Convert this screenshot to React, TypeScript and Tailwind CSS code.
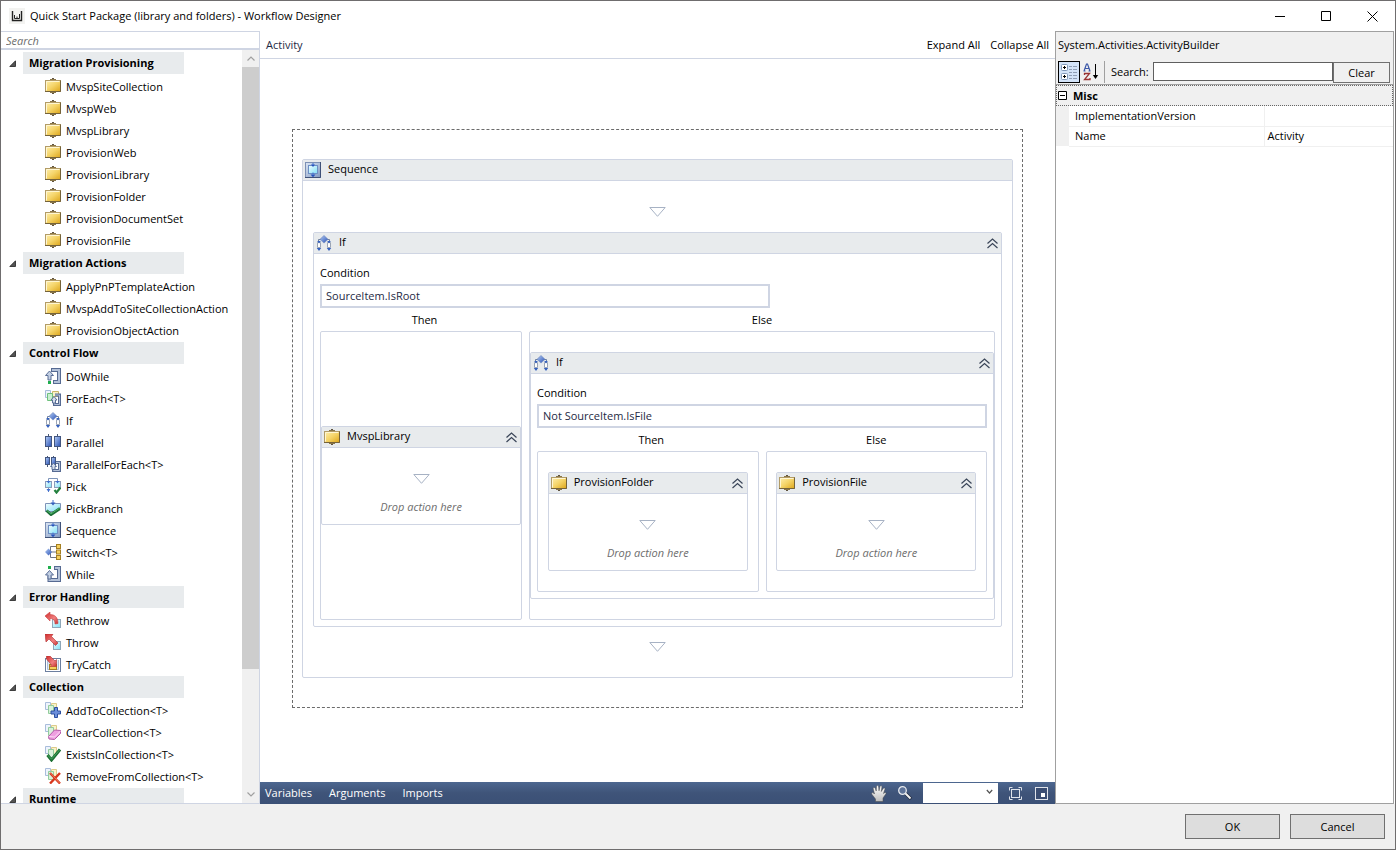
import { ReactNode } from "react";
import clsx from "clsx";

type IconName =
  | "activity" | "doWhile" | "forEach" | "if" | "parallel" | "parallelForEach" | "pick" | "pickBranch"
  | "sequence" | "switch" | "while" | "rethrow" | "throw" | "tryCatch"
  | "addTo" | "clear" | "exists" | "remove";

const toolbox: { title: string; items: [IconName, string][] }[] = [
  {
    title: "Migration Provisioning",
    items: [
      ["activity", "MvspSiteCollection"],
      ["activity", "MvspWeb"],
      ["activity", "MvspLibrary"],
      ["activity", "ProvisionWeb"],
      ["activity", "ProvisionLibrary"],
      ["activity", "ProvisionFolder"],
      ["activity", "ProvisionDocumentSet"],
      ["activity", "ProvisionFile"],
    ],
  },
  {
    title: "Migration Actions",
    items: [
      ["activity", "ApplyPnPTemplateAction"],
      ["activity", "MvspAddToSiteCollectionAction"],
      ["activity", "ProvisionObjectAction"],
    ],
  },
  {
    title: "Control Flow",
    items: [
      ["doWhile", "DoWhile"],
      ["forEach", "ForEach<T>"],
      ["if", "If"],
      ["parallel", "Parallel"],
      ["parallelForEach", "ParallelForEach<T>"],
      ["pick", "Pick"],
      ["pickBranch", "PickBranch"],
      ["sequence", "Sequence"],
      ["switch", "Switch<T>"],
      ["while", "While"],
    ],
  },
  {
    title: "Error Handling",
    items: [
      ["rethrow", "Rethrow"],
      ["throw", "Throw"],
      ["tryCatch", "TryCatch"],
    ],
  },
  {
    title: "Collection",
    items: [
      ["addTo", "AddToCollection<T>"],
      ["clear", "ClearCollection<T>"],
      ["exists", "ExistsInCollection<T>"],
      ["remove", "RemoveFromCollection<T>"],
    ],
  },
  { title: "Runtime", items: [] },
];

/* ---------- icons ---------- */

// shared gradients, referenced by id from every icon
function Gradients() {
  return (
    <svg className="absolute h-0 w-0" aria-hidden="true">
      <defs>
        <linearGradient id="gold" x1="0" y1="0" x2="1" y2="1">
          <stop offset="0" stopColor="#fff0b0" />
          <stop offset="0.5" stopColor="#f5d468" />
          <stop offset="1" stopColor="#dca51a" />
        </linearGradient>
        <linearGradient id="blue" x1="0" y1="0" x2="1" y2="1">
          <stop offset="0" stopColor="#b4cdf5" />
          <stop offset="1" stopColor="#2850b4" />
        </linearGradient>
        <linearGradient id="frame" x1="0" y1="0" x2="1" y2="1">
          <stop offset="0" stopColor="#dce6f4" />
          <stop offset="1" stopColor="#8299c0" />
        </linearGradient>
        <linearGradient id="sky" x1="0" y1="0" x2="1" y2="1">
          <stop offset="0" stopColor="#f2fdff" />
          <stop offset="1" stopColor="#7fe0f6" />
        </linearGradient>
        <linearGradient id="red" x1="0" y1="0" x2="1" y2="1">
          <stop offset="0" stopColor="#d02a2a" />
          <stop offset="0.6" stopColor="#f08080" />
          <stop offset="1" stopColor="#c83030" />
        </linearGradient>
        <linearGradient id="hand" x1="0" y1="0" x2="0" y2="1">
          <stop offset="0" stopColor="#ffffff" />
          <stop offset="1" stopColor="#bdbdbd" />
        </linearGradient>
      </defs>
    </svg>
  );
}

// stack of three sheets behind the collection icons
const pages = (
  <>
    <path d="M.5.5h5v7h-5z" fill="#eef4fc" stroke="#a9bddb" />
    <path d="M6.5 1.5h5v7h-5z" fill="#fbf2c8" stroke="#dccb8a" />
    <path d="M3.5 3.5h5v8h-5z" fill="#d9f2dc" stroke="#93cc9c" />
  </>
);

const shapes: Record<IconName, ReactNode> = {
  activity: (
    <>
      <path d="M7 .5h2M7 15.5h2" stroke="#5f5340" />
      <path d="M5 1.5h6M5 14.5h6" stroke="#8a7648" />
      <rect x="0.5" y="2.5" width="15" height="11" fill="url(#gold)" stroke="#b39c66" />
      <path d="M1.5 12.5v-9h13" fill="none" stroke="#fff6d2" />
      <path d="M0 13.5h15.5v-11" fill="none" stroke="#75633a" />
    </>
  ),
  doWhile: (
    <>
      <path d="M6 2h8v12H8" fill="none" stroke="#566a92" strokeWidth="4" />
      <path d="M7 2h7v12H9" fill="none" stroke="#b3c1d8" strokeWidth="2" />
      <path d="M4.5 3l4 4.5H6V12H3V7.500H.5z" fill="#c3d0e4" stroke="#5b6f96" />
      <rect x="3" y="13" width="3" height="3" fill="#1fae4d" />
    </>
  ),
  while: (
    <>
      <path d="M9 2h5v12H4.500V10" fill="none" stroke="#566a92" strokeWidth="4" />
      <path d="M10 2h4v12H4.500V10" fill="none" stroke="#b3c1d8" strokeWidth="2" />
      <path d="M4.500 4.500l4 4.500H6v4H3V9H.5z" fill="#c3d0e4" stroke="#5b6f96" />
      <rect x="3" y="0" width="3" height="3" fill="#1fae4d" />
    </>
  ),
  forEach: (
    <>
      <path d="M.5.5h5v7h-5z" fill="#eef4fc" stroke="#a9bddb" />
      <path d="M7.5 1.5h6v5h-6z" fill="#fbf2c8" stroke="#c9b468" />
      <path d="M2.5 3.5h5v7h-5z" fill="#c9efd0" stroke="#6ec07c" />
      <path d="M10 5h4.5v9.5h-5V10" fill="none" stroke="#566a92" strokeWidth="3" />
      <path d="M10 5h4.5v9.5h-5V10" fill="none" stroke="#b3c1d8" />
      <path d="M9 6.5l3 3.5h-1.5v3h-3v-3H6z" fill="#d5deec" stroke="#5b6f96" />
    </>
  ),
  if: (
    <>
      <path d="M5 4.5H2.5V7M11 4.5h2.5V7" fill="none" stroke="#6d7f9f" />
      <path d="M1.5 7.5h3v5h-3zM11.5 7.5h3v5h-3z" fill="#fff" stroke="#9ba5b5" />
      <path d="M8 .5l4 3.8-4 3.8-4-3.8z" fill="url(#blue)" stroke="#6b84b8" strokeWidth=".6" />
      <path d="M1.2 6h3.600L3 8.500zM11.200 6h3.600L13 8.500zM.8 13h4.400L3 16zM10.800 13h4.400L13 16z" fill="#3560bd" />
    </>
  ),
  parallel: (
    <>
      <path d="M3.5 0v16M12.5 0v16" stroke="#4a5a78" />
      <rect x=".5" y="2.5" width="6" height="10" fill="url(#blue)" stroke="#42557f" />
      <rect x="9.5" y="2.5" width="6" height="10" fill="url(#blue)" stroke="#42557f" />
    </>
  ),
  parallelForEach: (
    <>
      <path d="M2.5 0v11M8.5 0v10" stroke="#4a5a78" />
      <rect x=".5" y="1.5" width="4" height="7" fill="url(#blue)" stroke="#42557f" />
      <rect x="6.5" y="1.5" width="4" height="7" fill="url(#blue)" stroke="#42557f" />
      <path d="M11 6.5h3.5v8h-6V11" fill="none" stroke="#566a92" strokeWidth="3" />
      <path d="M11 6.5h3.5v8h-6V11" fill="none" stroke="#b4c2d8" />
      <path d="M8.5 7l3 3.5H10v3H7v-3H5.500z" fill="#d5deec" stroke="#5b6f96" />
    </>
  ),
  pick: (
    <>
      <path d="M3.5 4V.5h9V4M3.5 8v6" fill="none" stroke="#7d93b8" />
      <rect x=".5" y="3.5" width="6" height="6" fill="url(#sky)" stroke="#8b9dba" />
      <rect x="9.5" y="3.5" width="6" height="6" fill="url(#sky)" stroke="#8b9dba" />
      <path d="M1.500 3h4l-2 2.500zM10.500 3h4l-2 2.500zM1.500 11h4l-2 3z" fill="#3f6fd0" />
      <path d="M9.500 12l2 2.500 4-5" fill="none" stroke="#23803e" strokeWidth="2.200" />
    </>
  ),
  pickBranch: (
    <>
      <path d="M8 0v4" stroke="#3f6fd0" />
      <path d="M.5 3.500h15v5l-4.500 3H.500z" fill="url(#sky)" stroke="#7d93b8" />
      <path d="M5.500 2.500h5L8 5.500z" fill="#3560bd" />
      <path d="M1.500 10.500l4.500 4L15 8.500" fill="none" stroke="#1d6f38" strokeWidth="3" />
      <path d="M2 10.500l4 3.300 8.500-5.600" fill="none" stroke="#4bb268" />
    </>
  ),
  sequence: (
    <>
      <rect x=".5" y=".5" width="15" height="15" fill="url(#frame)" stroke="#7c90b4" />
      <path d="M0 15.500h15.500V0" fill="none" stroke="#3f5178" />
      <rect x="3.500" y="3.500" width="9" height="8" fill="url(#sky)" stroke="#6d8fc4" />
      <path d="M6 2.500h4L8 5zM5.500 12.500h5L8 15.200z" fill="#2453bd" />
      <path d="M8 1v2M8 10.500v2" stroke="#3f6fd0" />
    </>
  ),
  switch: (
    <>
      <path d="M11 2.500H5.500v11H11M3 8h8" fill="none" stroke="#6f7480" />
      <path d="M3.500 4.500L7 8l-3.500 3.500L0 8z" fill="url(#blue)" />
      <rect x="11.500" y=".5" width="4" height="4" fill="#f5cf5c" stroke="#a57f20" />
      <rect x="11.500" y="6" width="4" height="4" fill="#f5cf5c" stroke="#a57f20" />
      <rect x="11.500" y="11.500" width="4" height="4" fill="#f5cf5c" stroke="#a57f20" />
    </>
  ),
  rethrow: (
    <>
      <rect x="7.500" y="7.500" width="8" height="8" fill="url(#sky)" stroke="#8fa7b8" />
      <path
        d="M0 4l5-4v2.500c5 0 8 3 8 9l-3 .5c0-4-2-5.500-5-5.500V9z"
        fill="url(#red)"
        stroke="#c94040"
        strokeWidth=".6"
      />
    </>
  ),
  throw: (
    <>
      <rect x="8.500" y="7.500" width="7" height="8" fill="url(#sky)" stroke="#8fa7b8" />
      <path d="M0 0h8L6.500 2.500 13 9l-2.500 2.500L4 5 1 8z" fill="url(#red)" stroke="#b03030" strokeWidth=".6" />
    </>
  ),
  tryCatch: (
    <>
      <rect x=".5" y="2.500" width="15" height="13" fill="#fff" stroke="#6c7f9f" />
      <path d="M2.500 4v9.500h11V4" fill="#dcebf7" stroke="#a9bdd6" />
      <rect x="4.500" y="8.500" width="7" height="5" fill="#f5cf5c" stroke="#a57f20" />
      <path
        d="M1.500 0H5l5 5 1.500-1.500V10.500H5L6.500 9 1.500 3z"
        fill="url(#red)"
        stroke="#b03030"
        strokeWidth=".6"
      />
    </>
  ),
  addTo: (
    <>
      {pages}
      <path d="M9.500 5.500h3v3.500h3v3h-3v3.500h-3V12H6V9h3.500z" fill="#6c8fdc" stroke="#2c4fa0" />
    </>
  ),
  clear: (
    <>
      {pages}
      <path d="M3.500 12.500l6-6.500 6 .5v3l-6 6-5.500-.5z" fill="#ee9fe0" stroke="#b45aa8" />
      <path d="M4 12.500l5.500.5 6-6" fill="none" stroke="#fbdcf5" />
    </>
  ),
  exists: (
    <>
      {pages}
      <path d="M2.500 9l4 5L15 3.500" fill="none" stroke="#1c7034" strokeWidth="3" />
      <path d="M2.800 9.200l3.700 4L14.500 4" fill="none" stroke="#45a55e" />
    </>
  ),
  remove: (
    <>
      {pages}
      <path d="M5 5l10 10.500M15 5L5 15.500" stroke="#d8361c" strokeWidth="2.400" />
      <path d="M5.500 5l9 10" stroke="#f28a6a" strokeWidth=".8" />
    </>
  ),
};

function Icon({ name }: { name: IconName }) {
  return (
    <svg viewBox="0 0 16 16" className="h-4 w-4 shrink-0" aria-hidden="true">
      {shapes[name]}
    </svg>
  );
}

function DropArrow() {
  return (
    <svg viewBox="0 0 17 10" className="h-2.5 w-[17px]" aria-hidden="true">
      <path d="M.8.5h15.400L8.500 9.300z" fill="#fff" stroke="#a7b2c4" />
    </svg>
  );
}

function CollapseButton() {
  return (
    <button type="button" aria-label="Collapse" className="mr-[3px] ml-auto flex h-3 w-3 items-center justify-center">
      <svg viewBox="0 0 11 11" className="h-[11px] w-[11px]" fill="none" stroke="#3a4558" strokeWidth="1.2">
        <path d="M.5 5.500L5.500 1l5 4.500M.5 10l5-4.500 5 4.500" />
      </svg>
    </button>
  );
}

/* ---------- designer surface ---------- */

type CardProps = { icon: IconName; title: string; collapsible?: boolean; className?: string; children: ReactNode };

function Card({ icon, title, collapsible = true, className, children }: CardProps) {
  return (
    <section className={clsx("rounded-xs border border-[#cfd5e3] bg-white", className)}>
      <header className="flex h-[21px] items-center border-b border-[#cfd5e3] bg-[#e8ebed] pl-0.5">
        <Icon name={icon} />
        <h3 className="pb-0.5 pl-[7px]">{title}</h3>
        {collapsible && <CollapseButton />}
      </header>
      {children}
    </section>
  );
}

function ActionCard({ title }: { title: string }) {
  return (
    <Card icon="activity" title={title} className="w-[200px]">
      <div className="flex h-[76px] flex-col items-center pt-[26px]">
        <DropArrow />
        <p className="pt-[15px] italic text-[#6d6d6d]">Drop action here</p>
      </div>
    </Card>
  );
}

function Branch({ label, padded, children }: { label: "Then" | "Else"; padded?: boolean; children: ReactNode }) {
  return (
    <div className="flex grow flex-col">
      {/* the first label is centred over its column and the gap */}
      <h4 className={clsx("pb-[3px] text-center", label === "Then" && "pl-[7px]")}>{label}</h4>
      <div
        className={clsx(
          "flex grow items-center justify-center rounded-xs border border-[#cfd5e3] py-5",
          padded && "px-[9px]"
        )}
      >
        {children}
      </div>
    </div>
  );
}

function IfActivity({ id, condition, children }: { id: string; condition: string; children: ReactNode }) {
  return (
    <Card icon="if" title="If">
      <div className="p-1.5 pt-[11px]">
        <label htmlFor={id} className="block">
          Condition
        </label>
        <input
          id={id}
          defaultValue={condition}
          className="mt-[3px] block h-6 w-[450px] border-2 border-[#cfd5e3] px-1 pb-0.5 text-[#1e2a44] outline-none"
        />
        <div className="mt-1 flex gap-[7px]">{children}</div>
      </div>
    </Card>
  );
}

function DropZone({ className }: { className: string }) {
  return (
    <div className={clsx("flex items-start justify-center", className)}>
      <DropArrow />
    </div>
  );
}

function Designer() {
  return (
    <div className="flex min-h-0 grow items-start justify-center overflow-hidden bg-white pt-[70px]">
      <div className="border border-dashed border-[#6b6b6b] px-[9px] py-[29px]">
        <Card icon="sequence" title="Sequence" collapsible={false}>
          <div className="px-2.5">
            <DropZone className="h-[51px] pt-[26px]" />
            <IfActivity id="condition-root" condition="SourceItem.IsRoot">
              <Branch label="Then">
                <ActionCard title="MvspLibrary" />
              </Branch>
              <Branch label="Else">
                <IfActivity id="condition-file" condition="Not SourceItem.IsFile">
                  <Branch label="Then" padded>
                    <ActionCard title="ProvisionFolder" />
                  </Branch>
                  <Branch label="Else" padded>
                    <ActionCard title="ProvisionFile" />
                  </Branch>
                </IfActivity>
              </Branch>
            </IfActivity>
            <DropZone className="h-[50px] pt-[15px]" />
          </div>
        </Card>
      </div>
    </div>
  );
}

/* ---------- panels ---------- */

function TitleBar() {
  return (
    <header className="flex h-[30px] shrink-0 items-center bg-white pl-2">
      <svg viewBox="0 0 16 16" className="h-4 w-4" fill="none" stroke="#222">
        <path d="M0 0h16v16H0z" fill="#f3f3f1" stroke="none" />
        <path d="M3.500 3v9.500h9V3" strokeWidth="1.400" />
        <path d="M5.500 7v3.500M8 8.500v2M10.500 6v4.500M5.500 10.500h5" />
      </svg>
      <h1 className="pl-[5px]">Quick Start Package (library and folders) - Workflow Designer</h1>
      <div className="ml-auto flex h-full">
        <button type="button" aria-label="Minimize" className="flex w-[46px] items-center justify-center">
          <svg viewBox="0 0 11 11" className="h-[11px] w-[11px]" stroke="#000">
            <path d="M0 5.500h10" />
          </svg>
        </button>
        <button type="button" aria-label="Maximize" className="flex w-[46px] items-center justify-center">
          <svg viewBox="0 0 11 11" className="h-[11px] w-[11px]" fill="none" stroke="#000">
            <path d="M.5.5h9v9h-9z" />
          </svg>
        </button>
        <button type="button" aria-label="Close" className="flex w-[46px] items-center justify-center">
          <svg viewBox="0 0 11 11" className="h-[11px] w-[11px]" stroke="#000">
            <path d="M.5.5l10 10M10.500.5l-10 10" />
          </svg>
        </button>
      </div>
    </header>
  );
}

function ScrollArrow({ up }: { up?: boolean }) {
  return (
    <button
      type="button"
      aria-label={up ? "Scroll up" : "Scroll down"}
      className="flex h-[17px] shrink-0 items-center justify-center"
    >
      <svg viewBox="0 0 8 5" className="h-[5px] w-2" fill="none" stroke="#a0a0a0" strokeWidth="1.2">
        <path d={up ? "M.5 4.500L4 1l3.500 3.500" : "M.5.500L4 4 7.500.500"} />
      </svg>
    </button>
  );
}

function Toolbox() {
  return (
    <aside className="flex w-[259px] shrink-0 flex-col border border-l-0 border-[#cfd5e3] bg-white">
      <input
        type="text"
        aria-label="Search activities"
        placeholder="Search"
        className="h-[18px] w-full shrink-0 border-b-2 border-[#cfd5e3] px-[5px] italic outline-none placeholder:text-[#6d6d6d]"
      />
      <div className="flex min-h-0 grow">
        <div className="grow overflow-hidden pt-0.5">
          {toolbox.map((group) => (
            <section key={group.title}>
              <h2 className="flex h-[22px] items-center">
                <button type="button" aria-label={"Toggle " + group.title} className="w-[22px] pl-2">
                  <svg viewBox="0 0 7 7" className="h-[7px] w-[7px]">
                    <path d="M6.500.8v5.700H.8z" fill="#555" stroke="#222" strokeWidth=".8" />
                  </svg>
                </button>
                <span className="flex h-full w-[161px] items-center bg-[#e8ebed] pl-1.5 font-bold">{group.title}</span>
              </h2>
              <ul className="py-px">
                {group.items.map(([icon, name]) => (
                  <li key={name} className="flex h-[22px] items-center gap-[5px] pl-11">
                    <Icon name={icon} />
                    <span className="pt-0.5">{name}</span>
                  </li>
                ))}
              </ul>
            </section>
          ))}
        </div>
        <div className="flex w-[17px] shrink-0 flex-col bg-[#f0f0f0]">
          <ScrollArrow up />
          <div className="h-4/5 bg-[#cdcdcd]" />
          <div className="grow" />
          <ScrollArrow />
        </div>
      </div>
    </aside>
  );
}

function DesignerBar() {
  return (
    <nav className="flex h-[22px] shrink-0 items-center bg-linear-to-b from-[#4d6790] via-[#3f5479] to-[#3b5076] pl-[5px] text-white">
      <div className="flex gap-[17px]">
        <button type="button">Variables</button>
        <button type="button">Arguments</button>
        <button type="button">Imports</button>
      </div>
      <div className="ml-auto flex items-center">
        <button type="button" aria-label="Pan" className="mr-2.5">
          <svg viewBox="0 0 16 17" className="h-[17px] w-4">
            <path
              d="M4.500 16.500v-2.500L1 9.500C0 8 1.500 7 2.500 8l1 1L2.200 3.800c-.3-1.500 1.500-2 2-.5L5.200 6 5.500 1.800c.1-1.600 2-1.600 2.100 0L8 5.800l1-4.200c.4-1.400 2.100-1 1.900.4L10.300 6.500l1.900-3c.8-1.200 2.200-.4 1.700.8l-1.400 4.200 1.100-.8c1-.7 2 .3 1.200 1.300L12 13v3.500z"
              fill="url(#hand)"
              stroke="#4a4a4a"
              strokeWidth=".5"
            />
          </svg>
        </button>
        <button type="button" aria-label="Zoom tool" className="mr-2.5">
          <svg viewBox="0 0 16 16" className="h-4 w-4" fill="none">
            <path d="M8 8l6 6" stroke="#222c40" strokeWidth="3.400" />
            <path d="M8 8l5.500 5.500" stroke="#f2f2f2" strokeWidth="2" />
            <circle cx="5.500" cy="5.500" r="3.800" fill="#5d7399" stroke="#e6e9ee" strokeWidth="1.300" />
          </svg>
        </button>
        <div className="relative h-5 w-[75px]">
          <select aria-label="Zoom level" className="h-full w-full appearance-none bg-white text-black outline-none">
            <option></option>
          </select>
          <svg
            viewBox="0 0 7 6"
            className="pointer-events-none absolute top-1.5 right-[5px] h-1.5 w-[7px]"
            fill="none"
            stroke="#555"
            strokeWidth="1.200"
          >
            <path d="M.8 1l2.700 3L6.200 1" />
          </svg>
        </div>
        <button type="button" aria-label="Fit to screen" className="ml-2.5">
          <svg viewBox="0 0 15 15" className="h-[15px] w-[15px]" fill="none" stroke="#dfe3ea">
            <path d="M1.500 4.500v-3h3M10.500 1.500h3v3M13.500 10.500v3h-3M4.500 13.500h-3v-3" />
            <rect x="3.500" y="3.500" width="8" height="8" />
          </svg>
        </button>
        <button type="button" aria-label="Overview" className="mr-1.5 ml-[11px]">
          <svg viewBox="0 0 15 15" className="h-[15px] w-[15px]" fill="none">
            <rect x="1.500" y="1.500" width="12" height="12" stroke="#dfe3ea" fill="#3a4d72" />
            <rect x="7" y="7" width="4" height="4" fill="#fff" />
          </svg>
        </button>
      </div>
    </nav>
  );
}

function PropertyGrid() {
  return (
    <aside className="mr-px flex w-[339px] shrink-0 flex-col border border-[#a0a0a0] bg-white">
      <div className="h-[53px] shrink-0 border-b border-[#a0a0a0] bg-[#f0f0f0]">
        <h2 className="h-[29px] pt-[5px] pl-0.5">System.Activities.ActivityBuilder</h2>
        <div className="flex items-start pr-[3px] pl-0.5">
          <button
            type="button"
            aria-label="Categorized"
            className="flex h-[22px] w-[22px] items-center justify-center border border-black bg-[#d3e3f8]"
          >
            <svg viewBox="0 0 16 16" className="h-4 w-4" fill="none">
              <rect x=".5" y=".5" width="6" height="6" rx="1" fill="#fff" stroke="#7f97b8" />
              <rect x=".5" y="9.500" width="6" height="6" rx="1" fill="#fff" stroke="#7f97b8" />
              <path d="M2 3.500h3M3.500 2v3M2 12.500h3M3.500 11v3" stroke="#000" />
              <path
                d="M8 2.500h3M12 2.500h4M8 5.500h3M12 5.500h4M8 8.500h3M12 8.500h4M8 11.500h3M12 11.500h4M8 14.500h3M12 14.500h4"
                stroke="#8e9db5"
              />
            </svg>
          </button>
          <button
            type="button"
            aria-label="Sort alphabetically"
            className="flex h-[22px] w-[22px] items-center justify-center"
          >
            <svg viewBox="0 0 16 18" className="h-[18px] w-4" fill="none">
              <path d="M1 8l2.500-7h1L7 8M2 5.500h4M.5 8h2M5.500 8h2" stroke="#3b57a8" strokeWidth="1.200" />
              <path d="M1.500 12v-1.500h5L1.500 16.500H7V15" stroke="#9a3434" strokeWidth="1.300" />
              <path d="M12.500 1v12" stroke="#000" />
              <path d="M9.800 12h5.400l-2.700 4z" fill="#000" />
            </svg>
          </button>
          <div className="mx-0.5 h-[22px] w-px bg-[#a0a0a0]" />
          <label htmlFor="property-search" className="px-1 pt-[3px]">
            Search:
          </label>
          <input
            id="property-search"
            type="text"
            className="mt-px h-[19px] min-w-0 grow border border-[#5f5f5f] bg-white px-1 outline-none"
          />
          <button type="button" className="mt-px h-[21px] w-[57px] border border-[#707070] bg-[#f0f0f0]">
            Clear
          </button>
        </div>
      </div>
      <table className="w-full table-fixed border-collapse">
        <colgroup>
          <col className="w-[13px]" />
          <col className="w-[195px]" />
          <col />
        </colgroup>
        <thead>
          <tr className="h-[21px] bg-[#f0f0f0] outline-1 -outline-offset-1 outline-dotted outline-[#666]">
            <th colSpan={3} className="p-0 text-left">
              <div className="flex items-center gap-1.5 pl-0.5">
                <button type="button" aria-label="Collapse Misc" className="h-[9px] w-[9px]">
                  <svg viewBox="0 0 9 9" className="h-[9px] w-[9px]" fill="#fff" stroke="#000">
                    <path d="M.5.5h8v8h-8zM2 4.500h5" />
                  </svg>
                </button>
                Misc
              </div>
            </th>
          </tr>
        </thead>
        <tbody>
          {[
            ["ImplementationVersion", ""],
            ["Name", "Activity"],
          ].map(([name, value]) => (
            <tr key={name} className="h-5">
              <td className="bg-[#f0f0f0] p-0" />
              <td className="border-r border-b border-[#f0f0f0] p-0 pl-1.5">{name}</td>
              <td className="border-b border-[#f0f0f0] p-0 pl-[3px]">{value}</td>
            </tr>
          ))}
        </tbody>
      </table>
    </aside>
  );
}

export default function App() {
  return (
    <div className="flex h-screen flex-col overflow-hidden border border-[#6f6d6e] bg-white font-['Open_Sans','Noto_Sans',sans-serif] text-[11px] leading-4 text-black">
      <Gradients />
      <TitleBar />
      <div className="flex min-h-0 grow">
        <Toolbox />
        <main className="flex min-w-0 grow flex-col">
          <div className="flex h-7 shrink-0 items-center border-b border-[#cfd5e3] px-1.5">
            <button type="button" className="text-[#1e2a44]">
              Activity
            </button>
            <div className="ml-auto flex gap-2.5">
              <button type="button">Expand All</button>
              <button type="button">Collapse All</button>
            </div>
          </div>
          <Designer />
          <DesignerBar />
        </main>
        <PropertyGrid />
      </div>
      <footer className="flex h-[45px] shrink-0 items-center justify-end gap-2.5 bg-[#f0f0f0] pr-2.5">
        <button type="button" className="h-[25px] w-[95px] border border-[#707070] bg-[#dddddd]">
          OK
        </button>
        <button type="button" className="h-[25px] w-[95px] border border-[#707070] bg-[#dddddd]">
          Cancel
        </button>
      </footer>
    </div>
  );
}
